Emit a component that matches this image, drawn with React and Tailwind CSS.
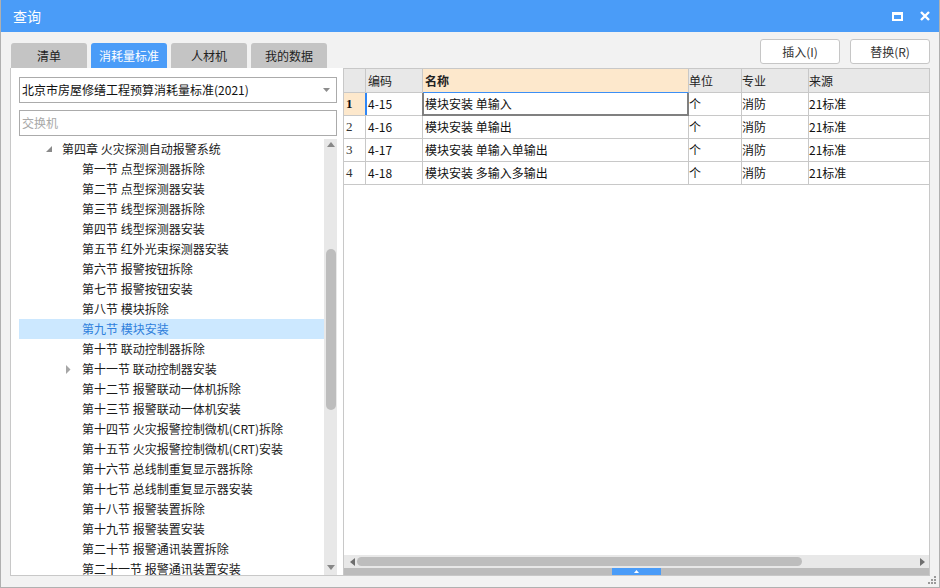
const treeItems = [
  { label: "第四章 火灾探测自动报警系统", level: 0, open: true },
  { label: "第一节 点型探测器拆除" },
  { label: "第二节 点型探测器安装" },
  { label: "第三节 线型探测器拆除" },
  { label: "第四节 线型探测器安装" },
  { label: "第五节 红外光束探测器安装" },
  { label: "第六节 报警按钮拆除" },
  { label: "第七节 报警按钮安装" },
  { label: "第八节 模块拆除" },
  { label: "第九节 模块安装", selected: true },
  { label: "第十节 联动控制器拆除" },
  { label: "第十一节 联动控制器安装", closed: true },
  { label: "第十二节 报警联动一体机拆除" },
  { label: "第十三节 报警联动一体机安装" },
  { label: "第十四节 火灾报警控制微机(CRT)拆除" },
  { label: "第十五节 火灾报警控制微机(CRT)安装" },
  { label: "第十六节 总线制重复显示器拆除" },
  { label: "第十七节 总线制重复显示器安装" },
  { label: "第十八节 报警装置拆除" },
  { label: "第十九节 报警装置安装" },
  { label: "第二十节 报警通讯装置拆除" },
  { label: "第二十一节 报警通讯装置安装" },
];

const rows = [
  { n: "1", code: "4-15", name: "模块安装 单输入" },
  { n: "2", code: "4-16", name: "模块安装 单输出" },
  { n: "3", code: "4-17", name: "模块安装 单输入单输出" },
  { n: "4", code: "4-18", name: "模块安装 多输入多输出" },
];

const tabs = ["清单", "消耗量标准", "人材机", "我的数据"];

function TreeRow({ item }) {
  const isChapter = item.level === 0;
  return (
    <div
      className={
        "h-[20px] flex items-center whitespace-nowrap " +
        (isChapter ? "pl-[24px] " : "pl-[44px] ") +
        (item.selected ? "bg-[#cce8ff] text-[#2f80dc]" : "text-[#1a1a1a]")
      }
    >
      <div className="w-[19px] h-[20px] flex items-center">
        {item.open && (
          <svg width="8" height="8" viewBox="0 0 8 8" className="ml-[2px]">
            <polygon points="7,1 7,7 1,7" fill="#8a8a8a" />
          </svg>
        )}
        {item.closed && (
          <svg width="6" height="9" viewBox="0 0 6 9" className="ml-[3px]">
            <polygon points="0,0 4.5,4.5 0,9" fill="#a6a6a6" />
          </svg>
        )}
      </div>
      <span>{item.label}</span>
    </div>
  );
}

export default function App() {
  return (
    <div className="w-[940px] h-[588px] relative flex flex-col bg-[#f2f2f2] border-x border-b border-[#b0b0b0] overflow-hidden font-['Noto_Sans_CJK_SC',sans-serif] text-[12px]">
      {/* Title bar */}
      <div className="h-[32px] shrink-0 bg-[#4a9cf8] flex items-center justify-between pl-[12px] pr-[9px]">
        <span className="text-white text-[14px]">查询</span>
        <div className="flex items-center gap-[17px]">
          <svg width="11" height="9" viewBox="0 0 11 9">
            <rect x="1" y="1" width="9" height="7" fill="none" stroke="white" strokeWidth="2" />
            <rect x="0" y="0" width="11" height="3" fill="white" />
          </svg>
          <svg width="10" height="10" viewBox="0 0 10 10">
            <path d="M1 1 L9 9 M9 1 L1 9" stroke="white" strokeWidth="2.4" />
          </svg>
        </div>
      </div>

      {/* Body */}
      <div className="flex-1 flex pl-[9px] pr-[9px] pb-[11px] min-h-0">
        {/* Left column */}
        <div className="w-[333px] shrink-0 flex flex-col">
          <div className="pt-[11px] flex gap-[4px] pl-[1px]">
            {tabs.map((t, i) => (
              <div
                key={t}
                className={
                  "w-[76px] h-[25px] rounded-t-[3px] flex items-center justify-center text-[12px] " +
                  (i === 1 ? "bg-[#4a9cf8] text-white" : "bg-[#c4c4c4] text-[#222]")
                }
              >
                {t}
              </div>
            ))}
          </div>
          <div className="flex-1 min-h-0 bg-white border-l border-b border-[#c8c8c8] pt-[9px] pl-[8px] pr-[6px] flex flex-col">
            <div className="h-[26px] shrink-0 border border-[#ababab] flex items-center justify-between pl-[2px] pr-[6px] text-[#111]">
              <span>北京市房屋修缮工程预算消耗量标准(2021)</span>
              <svg width="7" height="4" viewBox="0 0 7 4">
                <polygon points="0,0 7,0 3.5,4" fill="#8c8c8c" />
              </svg>
            </div>
            <div className="h-[26px] shrink-0 mt-[7px] border border-[#ababab] flex items-center pl-[2px] text-[#a8a8a8]">
              交换机
            </div>
            <div className="flex-1 min-h-0 mt-[3px] flex overflow-hidden">
              <div className="flex-1 overflow-hidden">
                {treeItems.map((it) => (
                  <TreeRow key={it.label} item={it} />
                ))}
              </div>
              <div className="w-[13px] bg-[#e8e8e8] flex flex-col items-center">
                <svg width="8" height="5" viewBox="0 0 8 5" className="mt-[3px]">
                  <polygon points="0,5 8,5 4,0" fill="#888" />
                </svg>
                <div className="mt-[102px] ml-[1px] w-[10px] h-[161px] rounded-full bg-[#bdbdbd]" />
                <div className="flex-1" />
                <svg width="8" height="5" viewBox="0 0 8 5" className="mb-[5px]">
                  <polygon points="0,0 8,0 4,5" fill="#888" />
                </svg>
              </div>
            </div>
          </div>
        </div>

        {/* Right column */}
        <div className="flex-1 flex flex-col min-w-0">
          <div className="pt-[7px] flex justify-end gap-[10px] pr-[0px]">
            <button className="w-[80px] h-[25px] bg-white border border-[#c6c6c6] rounded-[3px] text-[12px] text-[#333]">
              插入(I)
            </button>
            <button className="w-[80px] h-[25px] bg-white border border-[#c6c6c6] rounded-[3px] text-[12px] text-[#333]">
              替换(R)
            </button>
          </div>
          <div className="mt-[4px] flex-1 min-h-0 bg-white border border-[#c8c8c8] flex flex-col">
            {/* Header */}
            <div className="h-[24px] shrink-0 flex bg-[#e8e8e8] text-[#222]">
              <div className="w-[22px] border-r border-b border-[#c8c8c8]" />
              <div className="w-[57px] border-r border-b border-[#c8c8c8] pl-[2px] flex items-center">编码</div>
              <div className="w-[266px] border-r border-b border-r-[#c8c8c8] border-b-[#3c8ff5] bg-[#fde8cc] pl-[2px] flex items-center font-bold">名称</div>
              <div className="w-[53px] border-r border-b border-[#c8c8c8] flex items-center">单位</div>
              <div className="w-[67px] border-r border-b border-[#c8c8c8] flex items-center">专业</div>
              <div className="flex-1 border-b border-[#c8c8c8] flex items-center">来源</div>
            </div>
            {rows.map((r, i) => {
              const sel = i === 0;
              return (
                <div key={r.n} className="h-[23px] shrink-0 flex text-[#111]">
                  <div
                    className={
                      "w-[22px] border-r border-b border-[#c8c8c8] pl-[2px] flex items-center font-['Liberation_Serif',serif] text-[13px] " +
                      (sel ? "bg-[#fde8cc] font-bold" : "text-[#333]")
                    }
                  >
                    {r.n}
                  </div>
                  <div className="relative w-[57px] border-r border-b border-[#c8c8c8] pl-[2px] flex items-center">
                    {sel && <div className="absolute left-[-1px] top-0 bottom-0 w-[2px] bg-[#2f86f6]" />}
                    {r.code}
                  </div>
                  <div className="relative w-[266px] border-r border-b border-[#c8c8c8] pl-[2px] flex items-center">
                    {sel && (
                      <div className="absolute left-[-1px] right-[-1px] top-0 bottom-[-1px] border-l-2 border-r-2 border-b-2 border-[#808080]" />
                    )}
                    {r.name}
                  </div>
                  <div className="w-[53px] border-r border-b border-[#c8c8c8] flex items-center">个</div>
                  <div className="w-[67px] border-r border-b border-[#c8c8c8] flex items-center">消防</div>
                  <div className="flex-1 border-b border-[#c8c8c8] flex items-center">21标准</div>
                </div>
              );
            })}
            <div className="flex-1" />
            {/* Horizontal scrollbar */}
            <div className="h-[13px] shrink-0 bg-[#e8e8e8] flex items-center">
              <svg width="5" height="8" viewBox="0 0 5 8" className="ml-[6px]">
                <polygon points="5,0 5,8 0,4" fill="#6e6e6e" />
              </svg>
              <div className="ml-[2px] w-[445px] h-[9px] rounded-full bg-[#bdbdbd]" />
              <div className="flex-1" />
              <svg width="5" height="8" viewBox="0 0 5 8" className="mr-[4px]">
                <polygon points="0,0 5,4 0,8" fill="#6e6e6e" />
              </svg>
            </div>
            <div className="h-[7px] shrink-0 bg-[#bcbcbc] flex">
              <div className="ml-[268px] w-[49px] bg-[#4a9cf8] flex items-center justify-center">
                <svg width="5" height="3" viewBox="0 0 5 3">
                  <polygon points="0,3 5,3 2.5,0" fill="white" />
                </svg>
              </div>
            </div>
          </div>
        </div>
      </div>

      {/* Resize grip */}
      <svg width="9" height="9" viewBox="0 0 9 9" className="absolute right-[2px] bottom-[2px]">
        <rect x="6" y="0" width="2" height="2" fill="#9a9a9a" />
        <rect x="3" y="3" width="2" height="2" fill="#9a9a9a" />
        <rect x="6" y="3" width="2" height="2" fill="#9a9a9a" />
        <rect x="0" y="6" width="2" height="2" fill="#9a9a9a" />
        <rect x="3" y="6" width="2" height="2" fill="#9a9a9a" />
        <rect x="6" y="6" width="2" height="2" fill="#9a9a9a" />
      </svg>
    </div>
  );
}
